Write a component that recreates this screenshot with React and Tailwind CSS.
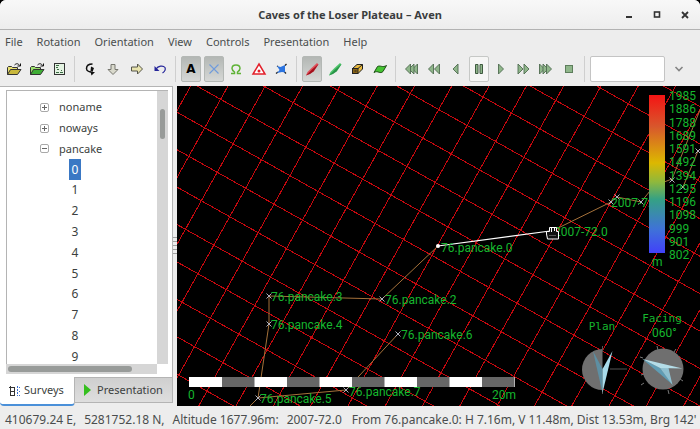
import React from 'react';

const menus = ['File', 'Rotation', 'Orientation', 'View', 'Controls', 'Presentation', 'Help'];
const surveys = ['0', '1', '2', '3', '4', '5', '6', '7', '8', '9'];
const position = ['410679.24 E,', '5281752.18 N,', 'Altitude 1677.96m:', '2007-72.0'];

const Icon = ({ children }) => (
  <svg viewBox="0 0 16 16" className="h-4 w-4" aria-hidden="true">{children}</svg>
);

const Folder = ({ back, front }) => (
  <Icon>
    <path d="M1.500 13.500v-7l1-1h3l1 1h5v2" fill={back} stroke="#333" />
    <path d="M1.500 13.500l3-5h10.500l-3.500 5z" fill={front} stroke="#333" />
    <path d="M8.500 4c2-2 4-1.500 5 .5M14.500 2.500v2.500h-3" fill="none" stroke="#111" />
  </Icon>
);

const Pen = ({ light, dark }) => (
  <Icon>
    <path d="M13 2l1.500 1.500-4.500 6.500-4 2.500-4 2 1.500-3.500 4-4z" fill={light} />
    <path d="M14.500 3l-5 7.500-3.500 2.500-4 1.500 6-6z" fill={dark} />
  </Icon>
);

const Tris = ({ xs, w = 5, left }) => (
  <Icon>
    {xs.map((x) => (
      <path
        key={x}
        d={left ? `M${x + w} 3v10L${x} 8z` : `M${x} 3v10L${x + w} 8z`}
        fill="#8fb68a"
        stroke="#4f6b50"
        strokeWidth="0.900"
      />
    ))}
  </Icon>
);

const groups = [
  {
    width: 'w-[65px]',
    items: [
      ['Open', <Folder back="#e8e070" front="#c9b83c" />],
      ['Open terrain', <Folder back="#9be06c" front="#3fae35" />],
      ['Survey log', <Icon>
        <rect x="3.500" y="2.500" width="10" height="11" fill="#e4f3e2" stroke="#333" />
        <path d="M5 4.500h3M5 6.500h2M6 8.500h2M5 11.500h3M9 11.500h3M10 9.500h1" stroke="#3b6b45" />
      </Icon>],
    ],
  },
  {
    width: 'w-[90px]',
    items: [
      ['Rotate', <Icon>
        <path d="M10.500 3c-4.500 0-6 2-6 4.500s3 3.500 5 3.500" fill="none" stroke="#111" strokeWidth="1.500" />
        <path d="M8.500 11h4.500l-3.500 3.500zM9 5.500l3 1.500-1.500 4-2-1z" fill="#111" />
      </Icon>],
      ['Plan', <Icon><path d="M6 3.500h4v5h3l-5 5-5-5h3z" fill="#d9d9cc" stroke="#77776f" /></Icon>],
      ['Elevation', <Icon><path d="M2.500 6h6v-3l5 5-5 5v-3h-6z" fill="#e9e4ae" stroke="#55554a" /></Icon>],
      ['Undo', <Icon>
        <path d="M4 8c2-3 7-4 9-1.500 1 2.500-1 4.500-2.500 5.500" fill="none" stroke="#26269a" strokeWidth="1.200" />
        <path d="M2.500 5v5h5z" fill="#26269a" />
      </Icon>],
    ],
  },
  {
    width: 'w-[110px]',
    items: [
      ['Station names', <span className="font-['DejaVu_Sans'] text-[12px] font-bold text-black">A</span>, 'on'],
      ['Crosses', <Icon><path d="M3.500 3.500l9 9M12.500 3.500l-9 9" stroke="#6f9bdc" strokeWidth="1.100" /></Icon>, 'on'],
      ['Entrances', <Icon>
        <path d="M3 12.500h3.500v-1.500c-2-1.500-2.500-2.500-2.500-3.500 0-2.500 1.500-3.500 4-3.500s4 1 4 3.500c0 1-.5 2-2.500 3.500v1.500h3.500" fill="none" stroke="#5fb336" strokeWidth="1.500" />
      </Icon>],
      ['Fixed points', <Icon>
        <path d="M8 3L14 13h-12z" fill="#fff" stroke="#e3202b" strokeWidth="1.500" />
        <circle cx="8" cy="10" r="1.500" fill="#e3202b" />
      </Icon>],
      ['Exported points', <Icon>
        <path d="M3 12.500L5 11M12 4.500l1.500-1.500M11.500 11l1.500 1.500M4 5l1 .5" stroke="#222" strokeWidth="1.300" />
        <path d="M4 5l3.500 1L12 4v7.500l-3-.5L4 12l2.500-3z" fill="#2b74e0" />
      </Icon>],
    ],
  },
  {
    width: 'w-[88px]',
    items: [
      ['Underground legs', <Pen light="#e0505a" dark="#a3101c" />, 'on'],
      ['Surface legs', <Pen light="#4cc46a" dark="#2a9448" />],
      ['Tubes', <Icon>
        <path d="M3.500 7.500L8 3.500h5.500V8l-4.500 4.500z" fill="#e8b93e" stroke="#222" />
        <rect x="3.500" y="7.500" width="5.500" height="5" fill="#8a6416" stroke="#222" />
        <path d="M5.500 10h2M9 7.500l4.500-4" stroke="#222" />
      </Icon>],
      ['Terrain', <Icon><path d="M2 11.500L5.500 5.500c3-1.500 5 1.500 9-1L11 10.500c-3 3-5-1.500-9 1z" fill="#45c432" stroke="#1d4d16" /></Icon>],
    ],
  },
  {
    width: 'w-[178px]',
    items: [
      ['Very fast reverse', <Tris left xs={[9.500, 6, 2.500]} />],
      ['Fast reverse', <Tris left xs={[8.500, 2.500]} />],
      ['Reverse', <Tris left xs={[5]} />],
      ['Pause', <Icon>
        <path d="M4.500 3.500h2.500v9H4.500zM9 3.500h2.500v9H9z" fill="#8fb68a" stroke="#3f5a40" />
      </Icon>, 'framed'],
      ['Play', <Tris xs={[5.500]} />],
      ['Fast forward', <Tris xs={[2, 8]} />],
      ['Very fast forward', <Tris xs={[1.500, 5, 8.500]} />],
      ['Stop', <Icon><rect x="4.500" y="4.500" width="7" height="7" fill="#8fb68a" stroke="#5d7d5c" /></Icon>],
    ],
  },
];

const look = {
  on: 'border-[#b4b8b5] bg-linear-to-b from-[#b3b7b4] to-[#d6d8d6]',
  framed: 'border-[#c6c8c6] bg-[#f6f6f5]',
};

const grid = Array.from({ length: 41 }, (_, i) => i - 20);
const U = [28.4, 15.95];
const V = [-15.9, 28.5];
const O = [391, 195];
const pt = (a, b) => [O[0] + a * U[0] + b * V[0], O[1] + a * U[1] + b * V[1]];

const stations = [
  [382, 299], [269, 296], [269, 324], [258, 398], [346, 390], [398, 334],
  [611, 202], [617, 197], [641, 202], [672, 180], [683, 187], [698, 151],
];
const labels = [
  [441, 252, '76.pancake.0'], [385, 304, '76.pancake.2'], [271, 301, '76.pancake.3'],
  [271, 329, '76.pancake.4'], [260, 403, '76.pancake.5'], [401, 339, '76.pancake.6'],
  [349, 396, '76.pancake.7'], [554, 236, '2007-72.0'], [611, 207, '2007-72'],
];
const depths = ['1985', '1886', '1788', '1689', '1591', '1492', '1394', '1295', '1196', '1098', '999', '901', '802'];

function CaveView() {
  return (
    <svg
      viewBox="177 86 523 320"
      preserveAspectRatio="xMinYMin slice"
      role="img"
      aria-label="Cave survey plot"
      className="block min-h-0 min-w-0 flex-1 bg-black font-[Roboto,sans-serif] text-[12px]"
    >
      <defs>
        <linearGradient id="depth" x1="0" y1="0" x2="0" y2="1">
          <stop offset="0" stopColor="#f41414" />
          <stop offset="0.200" stopColor="#d8572c" />
          <stop offset="0.430" stopColor="#dcb800" />
          <stop offset="0.550" stopColor="#8fb83c" />
          <stop offset="0.660" stopColor="#35a184" />
          <stop offset="0.850" stopColor="#3f72d8" />
          <stop offset="1" stopColor="#4141fa" />
        </linearGradient>
      </defs>
      <g stroke="#c4080e" strokeWidth="1" shapeRendering="crispEdges">
        {grid.map((i) => {
          const [x1, y1] = pt(-20, i);
          const [x2, y2] = pt(20, i);
          return <line key={i} x1={x1} y1={y1} x2={x2} y2={y2} />;
        })}
        {grid.map((i) => {
          const [x1, y1] = pt(i, -20);
          const [x2, y2] = pt(i, 20);
          return <line key={i} x1={x1} y1={y1} x2={x2} y2={y2} />;
        })}
      </g>
      <g fill="none" stroke="#a5713a">
        <path d="M438 246L382 299L269 296L269 324L258 398L346 390L398 334M258 398l-8 8" />
        <path d="M552 231L611 202L617 197L641 202L650 191M664 182L672 179L700 110M683 187L698 151" />
      </g>
      <path d="M438 246L550 231" stroke="#fff" strokeWidth="1.200" />
      <circle cx="438" cy="246" r="2" fill="#fff" />
      <g stroke="#b0b0bc">
        {stations.map(([x, y]) => (
          <path key={`${x}-${y}`} d={`M${x - 2.5} ${y - 2.5}l5 5M${x + 2.5} ${y - 2.5}l-5 5`} />
        ))}
      </g>
      <g fill="#16b62e">
        {labels.map(([x, y, t]) => <text key={t} x={x} y={y}>{t}</text>)}
      </g>
      <rect x="649" y="95" width="16" height="158" fill="url(#depth)" />
      <g fill="#16b62e">
        {depths.map((d, i) => <text key={d} x="669" y={100 + i * 13.250}>{d}</text>)}
        <text x="652" y="266">m</text>
        <text x="188" y="399">0</text>
        <text x="492" y="399">20m</text>
        <text x="652" y="337">060°</text>
      </g>
      <g fill="#16b62e" textAnchor="middle" className="font-['DejaVu_Sans_Mono',monospace] text-[11px]">
        <text x="602" y="330">Plan</text>
        <text x="662" y="322">Facing</text>
      </g>
      <rect x="189" y="377" width="326" height="10" fill="#fff" />
      {[222, 287, 352, 417, 482].map((x) => (
        <rect key={x} x={x} y="377" width="32.500" height="10" fill="#666" />
      ))}
      <path d="M602.500 349a20.500 20.500 0 0 0 0 41z" fill="#6f6f6f" />
      <path d="M602.500 346v6M602.500 388v6M610 369h17" stroke="#555" />
      <path d="M593 351l9.500 18v24z" fill="#5d8fa3" />
      <path d="M612.500 351l-10 18v24z" fill="#a9dbea" />
      <path d="M657 346l1 4M676 349l-2 3M641 375l3-1M643 358l-3-1M683 381l-3-2M668 390l1 4M644 383l-3 2" stroke="#777" />
      <circle cx="663" cy="369" r="20.500" fill="#6f6f6f" />
      <path d="M642.500 359l17.500 9 13 17z" fill="#5f9db5" />
      <path d="M660 368l8.500 0 4 17z" fill="#8fc0d0" />
      <path d="M642.500 359l40 9.500-22.500-.5z" fill="#b4dde8" />
      <g stroke="#fff" fill="#111">
        <path d="M549.500 231.500v-4h7v4h2v7.500h-11l-1-5v-2.500z" />
        <path d="M551.500 228v4M554.500 228v3" />
        <path d="M549 235.500h7" stroke="#555" />
      </g>
    </svg>
  );
}

function Expander({ open }) {
  return (
    <button
      type="button"
      aria-label={open ? 'Collapse' : 'Expand'}
      className="flex h-[9px] w-[9px] items-center justify-center rounded-xs border border-[#a9a9a9] bg-white"
    >
      <svg viewBox="0 0 5 5" className="h-[5px] w-[5px]">
        <path d={open ? 'M0 2.500h5' : 'M0 2.500h5M2.500 0v5'} stroke="#666" />
      </svg>
    </button>
  );
}

function Sidebar() {
  return (
    <aside className="flex w-[173px] shrink-0 flex-col">
      <div className="flex min-h-0 flex-1 flex-col border-r border-t border-[#b4b4b4] bg-white pt-[3px] pr-1 pb-[3px] pl-[6px]">
        <div className="flex min-h-0 flex-1 border-l border-t border-[#b4b4b4]">
          <ul className="-mb-[3px] flex min-w-0 flex-1 flex-col overflow-hidden pt-[6px] leading-5 text-[#3c3f40]">
            {['noname', 'noways', 'pancake'].map((n) => (
              <li key={n} className="flex min-h-0 flex-1 items-center gap-[10px] pl-[33px] text-[11px]">
                <Expander open={n === 'pancake'} />
                <span>{n}</span>
              </li>
            ))}
            {surveys.map((n) => (
              <li key={n} className="flex min-h-0 flex-1 pl-[62px] text-[12px]">
                <span className={n === '0' ? 'flex w-3 items-center justify-center bg-[#3a78c4] text-white' : 'flex w-3 items-center justify-center'}>{n}</span>
              </li>
            ))}
          </ul>
          <div className="w-[11px] bg-[#d6d6d6] px-[3px] pt-[18px]">
            <div className="h-[30px] rounded-full bg-[#989b99]" />
          </div>
        </div>
        <div className="mr-[11px] h-[10px] bg-[#d6d6d6] p-0.5">
          <div className="h-[6px] w-[124px] rounded-full bg-[#989b99]" />
        </div>
      </div>
      <div role="tablist" className="flex h-[29px] items-start text-[11px] text-[#3c3f40]">
        <button type="button" role="tab" aria-selected="true" className="flex h-full w-[75px] items-center gap-1 rounded-b-sm border-b-2 border-r border-r-[#b4b4b4] border-b-[#4a90d9] bg-white pl-[9px]">
          <svg viewBox="0 0 11 12" className="h-3 w-[11px]">
            <path d="M1.500 1v10M0 2.500h6M1 6.500h5M1 10.500h5M5.500 2v9" stroke="#333" />
            <path d="M8.500 1v10" stroke="#3a6fd0" strokeDasharray="2 1" />
            <path d="M10.500 2v9" stroke="#3a6fd0" strokeDasharray="1 3" />
          </svg>
          Surveys
        </button>
        <button type="button" role="tab" aria-selected="false" className="flex h-[26px] flex-1 items-center gap-[5px] border-b border-r border-t border-[#b4b4b4] bg-linear-to-b from-[#cfcfcf] to-[#dedede] pl-[9px]">
          <svg viewBox="0 0 8 12" className="h-3 w-2"><path d="M0 0l7 6-7 6z" fill="#35bf1e" /></svg>
          Presentation
        </button>
      </div>
    </aside>
  );
}

export default function App() {
  return (
    <div className="h-screen bg-black">
      <div className="flex h-full flex-col overflow-hidden rounded-t-md bg-[#ededed] font-['Noto_Sans',sans-serif] text-[#4a4d4e]">
        <header className="flex h-[30px] shrink-0 items-center border-b border-[#b2b2b2] bg-linear-to-b from-[#f8f8f8] to-[#ededed]">
          <div className="w-[84px]" />
          <h1 className="flex-1 pt-px text-center text-[11px] font-bold text-[#3a3d3e]">Caves of the Loser Plateau – Aven</h1>
          <div className="flex w-[84px] justify-end gap-4 pr-[9px]">
            <button type="button" aria-label="Minimize"><svg viewBox="0 0 12 12" className="h-3 w-3"><path d="M3 8h6" stroke="#333" strokeWidth="2" /></svg></button>
            <button type="button" aria-label="Maximize"><svg viewBox="0 0 12 12" className="h-3 w-3"><rect x="3.500" y="3" width="5" height="5" fill="none" stroke="#333" strokeWidth="1.600" /></svg></button>
            <button type="button" aria-label="Close"><svg viewBox="0 0 12 12" className="h-3 w-3"><path d="M3 3l6 6M9 3l-6 6" stroke="#333" strokeWidth="1.800" /></svg></button>
          </div>
        </header>
        <nav className="flex h-[24px] shrink-0 items-center gap-[14px] px-[5px] text-[11px]">
          {menus.map((m) => <button type="button" key={m}>{m}</button>)}
        </nav>
        <div role="toolbar" className="flex h-[32px] shrink-0 items-center gap-[5px] pb-0.5 pl-1">
          {groups.map((g) => (
            <React.Fragment key={g.width}>
              <div className={`flex justify-between ${g.width}`}>
                {g.items.map(([name, icon, state]) => (
                  <button
                    type="button"
                    key={name}
                    aria-label={name}
                    className={`flex h-[26px] w-5 items-center justify-center rounded-xs border ${look[state] || 'border-transparent'}`}
                  >
                    {icon}
                  </button>
                ))}
              </div>
              <div className="h-[26px] w-px bg-[#cfcfcf]" />
            </React.Fragment>
          ))}
          <input aria-label="Find" className="h-[26px] w-[75px] rounded-xs border border-[#c4c4c4] bg-white px-1 text-[12px]" />
          <button type="button" aria-label="Find options" className="ml-1">
            <svg viewBox="0 0 10 10" className="h-[10px] w-[10px]"><path d="M1.500 3l3.500 3.500L8.500 3" fill="none" stroke="#858585" strokeWidth="1.600" /></svg>
          </button>
        </div>
        <main className="flex min-h-0 flex-1">
          <Sidebar />
          <div className="flex w-1 shrink-0 items-center">
            <svg viewBox="0 0 4 20" className="h-5 w-1"><path d="M0 1.500h4M0 5.500h4M0 9.500h4M0 13.500h4M0 17.500h4" stroke="#a0a0a0" /></svg>
          </div>
          <CaveView />
        </main>
        <footer className="flex h-[23px] shrink-0 items-center gap-[10px] overflow-hidden whitespace-nowrap pl-[5px] pt-1 text-[12px]">
          <div className="flex gap-2">
            {position.map((p) => <span key={p}>{p}</span>)}
          </div>
          <span>From 76.pancake.0: H 7.16m, V 11.48m, Dist 13.53m, Brg 142'</span>
        </footer>
      </div>
    </div>
  );
}
